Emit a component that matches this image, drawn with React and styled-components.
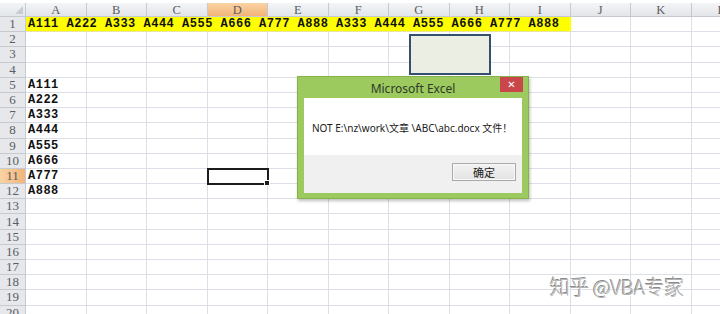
import React from 'react'
import styled, { createGlobalStyle } from 'styled-components'

const COLS = ['A', 'B', 'C', 'D', 'E', 'F', 'G', 'H', 'I', 'J', 'K', 'L']
const ROW_COUNT = 20
const ROW_H = 15.2
const COL_W = 60.5

const ROW1_TEXT = 'A111 A222 A333 A444 A555 A666 A777 A888 A333 A444 A555 A666 A777 A888'
const COL_A = { 5: 'A111', 6: 'A222', 7: 'A333', 8: 'A444', 9: 'A555', 10: 'A666', 11: 'A777', 12: 'A888' }

const GlobalStyle = createGlobalStyle`
    html, body {
        margin: 0;
        padding: 0;
        background: #fff;
        overflow: hidden;
    }
`;

const Page = styled.div`
    position: relative;
    width: 720px;
    height: 314px;
    box-sizing: border-box;
    padding-top: 3px;
    overflow: hidden;
    background: #fff;
`;

const Sheet = styled.div`
    display: grid;
    grid-template-columns: 26px repeat(12, ${COL_W}px);
    grid-template-rows: 14px repeat(${ROW_COUNT}, ${ROW_H}px);
`;

const Corner = styled.div`
    position: relative;
    box-sizing: border-box;
    background: linear-gradient(#f3f4f6, #e3e6ea);
    border-right: 1px solid #c6cad0;
    border-bottom: 1px solid #c6cad0;
    &::after {
        content: '';
        position: absolute;
        right: 2px;
        bottom: 2px;
        border-left: 8px solid transparent;
        border-bottom: 8px solid #c9cdd2;
    }
`;

const HeadBase = styled.div`
    box-sizing: border-box;
    display: flex;
    align-items: center;
    justify-content: center;
    font-family: "Liberation Serif", "DejaVu Serif", serif;
    font-size: 12.5px;
    color: #5a5d62;
    border-right: 1px solid #c6cad0;
    border-bottom: 1px solid #c6cad0;
    background: ${p => p.$active
        ? 'linear-gradient(#f9d3a3, #f3b47a)'
        : 'linear-gradient(#f4f5f7, #e2e5e9)'};
`;

const ColHead = styled(HeadBase)`
    padding-top: 1px;
`;

const RowHead = styled(HeadBase)`
    font-size: 13px;
    background: ${p => p.$active
        ? 'linear-gradient(90deg, #f9d3a3, #f3b47a)'
        : '#e6e8ec'};
`;

const Cell = styled.div`
    position: relative;
    box-sizing: border-box;
    border-right: 1px solid #dcdfe7;
    border-bottom: 1px solid #dcdfe7;
    padding-left: 2px;
    font-family: "Liberation Mono", "DejaVu Sans Mono", monospace;
    font-weight: bold;
    font-size: 12px;
    letter-spacing: 0.5px;
    line-height: ${ROW_H}px;
    color: #111;
    white-space: nowrap;
    ${p => p.$selected && `
        outline: 2px solid #1c1c1c;
        outline-offset: -1px;
        z-index: 1;
        &::after {
            content: '';
            position: absolute;
            right: -3px;
            bottom: -3px;
            width: 4px;
            height: 4px;
            background: #1c1c1c;
            border: 1px solid #fff;
        }
    `}
`;

const FillCell = styled(Cell)`
    grid-column: span ${p => p.$span};
    background: #ffff00;
    border-right: none;
    border-bottom: 1px solid #e6e6a0;
`;

const Shape = styled.div`
    position: absolute;
    left: 409px;
    top: 34px;
    width: 82px;
    height: 41px;
    box-sizing: border-box;
    border: 2px solid #34506e;
    background: #ebeee2;
`;

const Dialog = styled.div`
    position: absolute;
    left: 297px;
    top: 76px;
    width: 232px;
    height: 123px;
    box-sizing: border-box;
    padding: 0 6px 5px;
    display: flex;
    flex-direction: column;
    background: #9cca5e;
    border: 1px solid #86b24c;
    box-shadow: 1px 2px 3px rgba(0, 0, 0, 0.25);
`;

const TitleBar = styled.div`
    height: 21px;
    display: grid;
    grid-template-columns: 1fr auto 1fr;
    align-items: start;
`;

const Title = styled.div`
    grid-column: 2;
    padding-top: 3px;
    font-family: "Noto Sans", "Open Sans", sans-serif;
    font-size: 12px;
    color: #2f3a2a;
`;

const CloseBtn = styled.div`
    grid-column: 3;
    justify-self: end;
    margin-right: -1px;
    width: 23px;
    height: 15px;
    display: flex;
    align-items: center;
    justify-content: center;
    background: #c9464b;
    color: #fff;
    font-family: "DejaVu Sans", sans-serif;
    font-size: 10px;
    font-weight: bold;
`;

const Body = styled.div`
    height: 57px;
    display: flex;
    align-items: center;
    padding: 2px 0 0 8px;
    box-sizing: border-box;
    background: #fff;
    font-family: "Noto Sans", "Noto Sans CJK SC", sans-serif;
    font-size: 10px;
    color: #1a1a1a;
    white-space: nowrap;
`;

const Footer = styled.div`
    flex: 1;
    display: flex;
    justify-content: flex-end;
    align-items: flex-start;
    padding: 8px 6px 0 0;
    background: #f0f0f0;
`;

const Button = styled.div`
    width: 64px;
    height: 18px;
    box-sizing: border-box;
    display: flex;
    align-items: center;
    justify-content: center;
    border: 1px solid #a9a9a9;
    box-shadow: inset 0 0 0 1px #f8f8f8;
    background: linear-gradient(#f2f2f2, #e3e3e3);
    font-family: "Noto Sans CJK SC", sans-serif;
    font-size: 11px;
    color: #222;
`;

const Watermark = styled.div`
    position: absolute;
    left: 550px;
    top: 272px;
    font-family: "Noto Sans CJK SC", "Noto Sans", sans-serif;
    font-size: 20px;
    font-weight: 300;
    color: #b4b4b4;
    letter-spacing: -0.5px;
    text-shadow: 1px 1px 0 #ffffff, -1px -1px 0 #8a8a8a;
    white-space: nowrap;
`;

const App = () => {
    const rows = Array.from({ length: ROW_COUNT }, (_, i) => i + 1)

    return (
        <Page>
            <GlobalStyle />
            <Sheet>
                <Corner />
                {COLS.map(c => (
                    <ColHead key={c} $active={c === 'D'}>{c}</ColHead>
                ))}
                {rows.map(r => (
                    <React.Fragment key={r}>
                        <RowHead $active={r === 11}>{r}</RowHead>
                        {r === 1 ? (
                            <>
                                <FillCell $span={9}>{ROW1_TEXT}</FillCell>
                                {COLS.slice(9).map(c => <Cell key={c} />)}
                            </>
                        ) : (
                            COLS.map(c => (
                                <Cell key={c} $selected={r === 11 && c === 'D'}>
                                    {c === 'A' ? COL_A[r] : null}
                                </Cell>
                            ))
                        )}
                    </React.Fragment>
                ))}
            </Sheet>

            <Shape />

            <Dialog>
                <TitleBar>
                    <Title>Microsoft Excel</Title>
                    <CloseBtn>✕</CloseBtn>
                </TitleBar>
                <Body>NOT E:\nz\work\文章 \ABC\abc.docx 文件！</Body>
                <Footer>
                    <Button>确定</Button>
                </Footer>
            </Dialog>

            <Watermark>知乎 @VBA专家</Watermark>
        </Page>
    )
}

export default App
